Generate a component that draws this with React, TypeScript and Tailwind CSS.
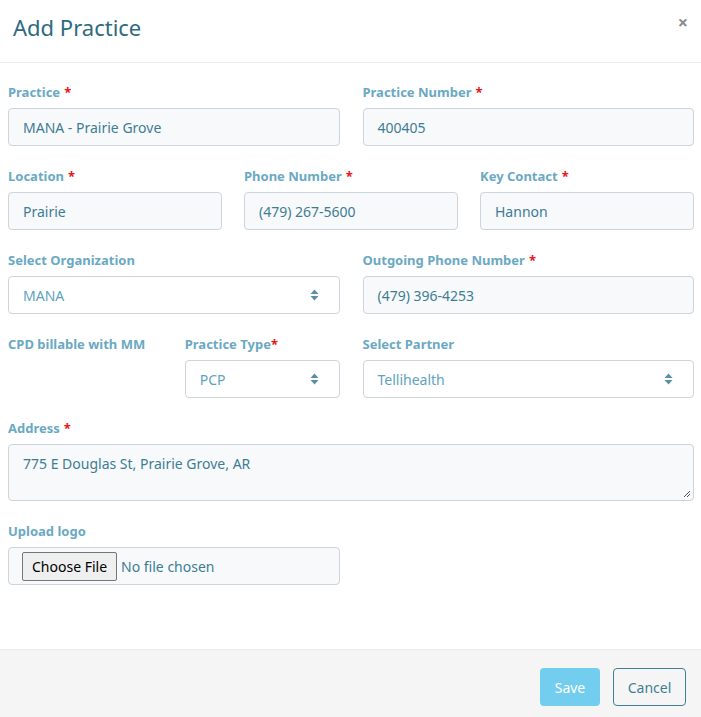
import type { ReactNode } from 'react';

const font = { fontFamily: '"Noto Sans", "Open Sans", sans-serif' };

function Label({ text, required, tight }: { text: string; required?: boolean; tight?: boolean }) {
  return (
    <label className="block text-[13px] font-bold leading-[18px] text-[#6aa9c4] mb-[7px]">
      {text}
      {required && <span className={`text-[#e8141b] ${tight ? '' : 'ml-1'}`}>*</span>}
    </label>
  );
}

function TextBox({ value }: { value: string }) {
  return (
    <div className="h-[38px] rounded-[4px] border border-[#cdd4db] bg-[#f7f9fb] px-[14px] flex items-center text-[14px] text-[#3e7d94]">
      {value}
    </div>
  );
}

function SelectBox({ value }: { value: string }) {
  return (
    <div className="h-[38px] rounded-[4px] border border-[#cdd4db] bg-white px-[14px] flex items-center justify-between text-[14px] text-[#5ea3c0]">
      <span>{value}</span>
      <svg width="9" height="12" viewBox="0 0 9 12" className="mr-[6px]">
        <path d="M4.5 0.5 L8.5 5 L0.5 5 Z" fill="#5b8fa3" />
        <path d="M4.5 11.5 L8.5 7 L0.5 7 Z" fill="#5b8fa3" />
      </svg>
    </div>
  );
}

function Field({ children }: { children: ReactNode }) {
  return <div className="mb-[21px]">{children}</div>;
}

export default function App() {
  return (
    <div className="w-[701px] h-[717px] bg-white flex flex-col" style={font}>
      <div className="h-[63px] border-b border-[#e9ecef] flex items-start justify-between pl-[13px] pr-[13px] pt-[12px]">
        <h1 className="text-[22px] leading-[30px] text-[#2e6a80]">Add Practice</h1>
        <button className="text-[18px] leading-[18px] font-bold text-[#8a8a8a] mt-[1px]">×</button>
      </div>

      <div className="flex-1 pl-[8px] pr-[7px] pt-[20px]">
        <div className="grid grid-cols-2 gap-x-[23px]">
          <Field>
            <Label text="Practice" required />
            <TextBox value="MANA - Prairie Grove" />
          </Field>
          <Field>
            <Label text="Practice Number" required />
            <TextBox value="400405" />
          </Field>
        </div>

        <div className="grid grid-cols-3 gap-x-[22px]">
          <Field>
            <Label text="Location" required />
            <TextBox value="Prairie" />
          </Field>
          <Field>
            <Label text="Phone Number" required />
            <TextBox value="(479) 267-5600" />
          </Field>
          <Field>
            <Label text="Key Contact" required />
            <TextBox value="Hannon" />
          </Field>
        </div>

        <div className="grid grid-cols-2 gap-x-[23px]">
          <Field>
            <Label text="Select Organization" />
            <SelectBox value="MANA" />
          </Field>
          <Field>
            <Label text="Outgoing Phone Number" required />
            <TextBox value="(479) 396-4253" />
          </Field>
        </div>

        <div className="grid grid-cols-2 gap-x-[23px]">
          <div className="grid grid-cols-2 gap-x-[22px]">
            <Field>
              <Label text="CPD billable with MM" />
            </Field>
            <Field>
              <Label text="Practice Type" required tight />
              <SelectBox value="PCP" />
            </Field>
          </div>
          <Field>
            <Label text="Select Partner" />
            <SelectBox value="Tellihealth" />
          </Field>
        </div>

        <Field>
          <Label text="Address" required />
          <div className="relative h-[57px] rounded-[4px] border border-[#cdd4db] bg-[#f7f9fb] px-[14px] pt-[8px] text-[14px] text-[#3e7d94]">
            775 E Douglas St, Prairie Grove, AR
            <svg width="8" height="8" viewBox="0 0 8 8" className="absolute right-[2px] bottom-[2px]">
              <path d="M7 1 L1 7 M7 4 L4 7" stroke="#555" strokeWidth="1" />
            </svg>
          </div>
        </Field>

        <div className="w-[332px]">
          <Label text="Upload logo" />
          <div className="h-[38px] rounded-[4px] border border-[#cdd4db] bg-[#f7f9fb] pl-[13px] flex items-center text-[14px] text-[#3e7d94]">
            <span className="h-[29px] px-[9px] flex items-center border border-[#767676] rounded-[2px] bg-[#efefef] text-black mr-[4px]">
              Choose File
            </span>
            No file chosen
          </div>
        </div>
      </div>

      <div className="h-[68px] bg-[#f5f5f5] border-t border-[#ebebeb] flex items-start justify-end gap-[13px] pr-[15px] pt-[18px]">
        <button className="h-[38px] w-[60px] rounded-[4px] bg-[#72cdee] text-white text-[14px]">Save</button>
        <button className="h-[38px] w-[73px] rounded-[4px] border border-[#3f7f95] bg-transparent text-[#3f7f95] text-[14px]">
          Cancel
        </button>
      </div>
    </div>
  );
}
